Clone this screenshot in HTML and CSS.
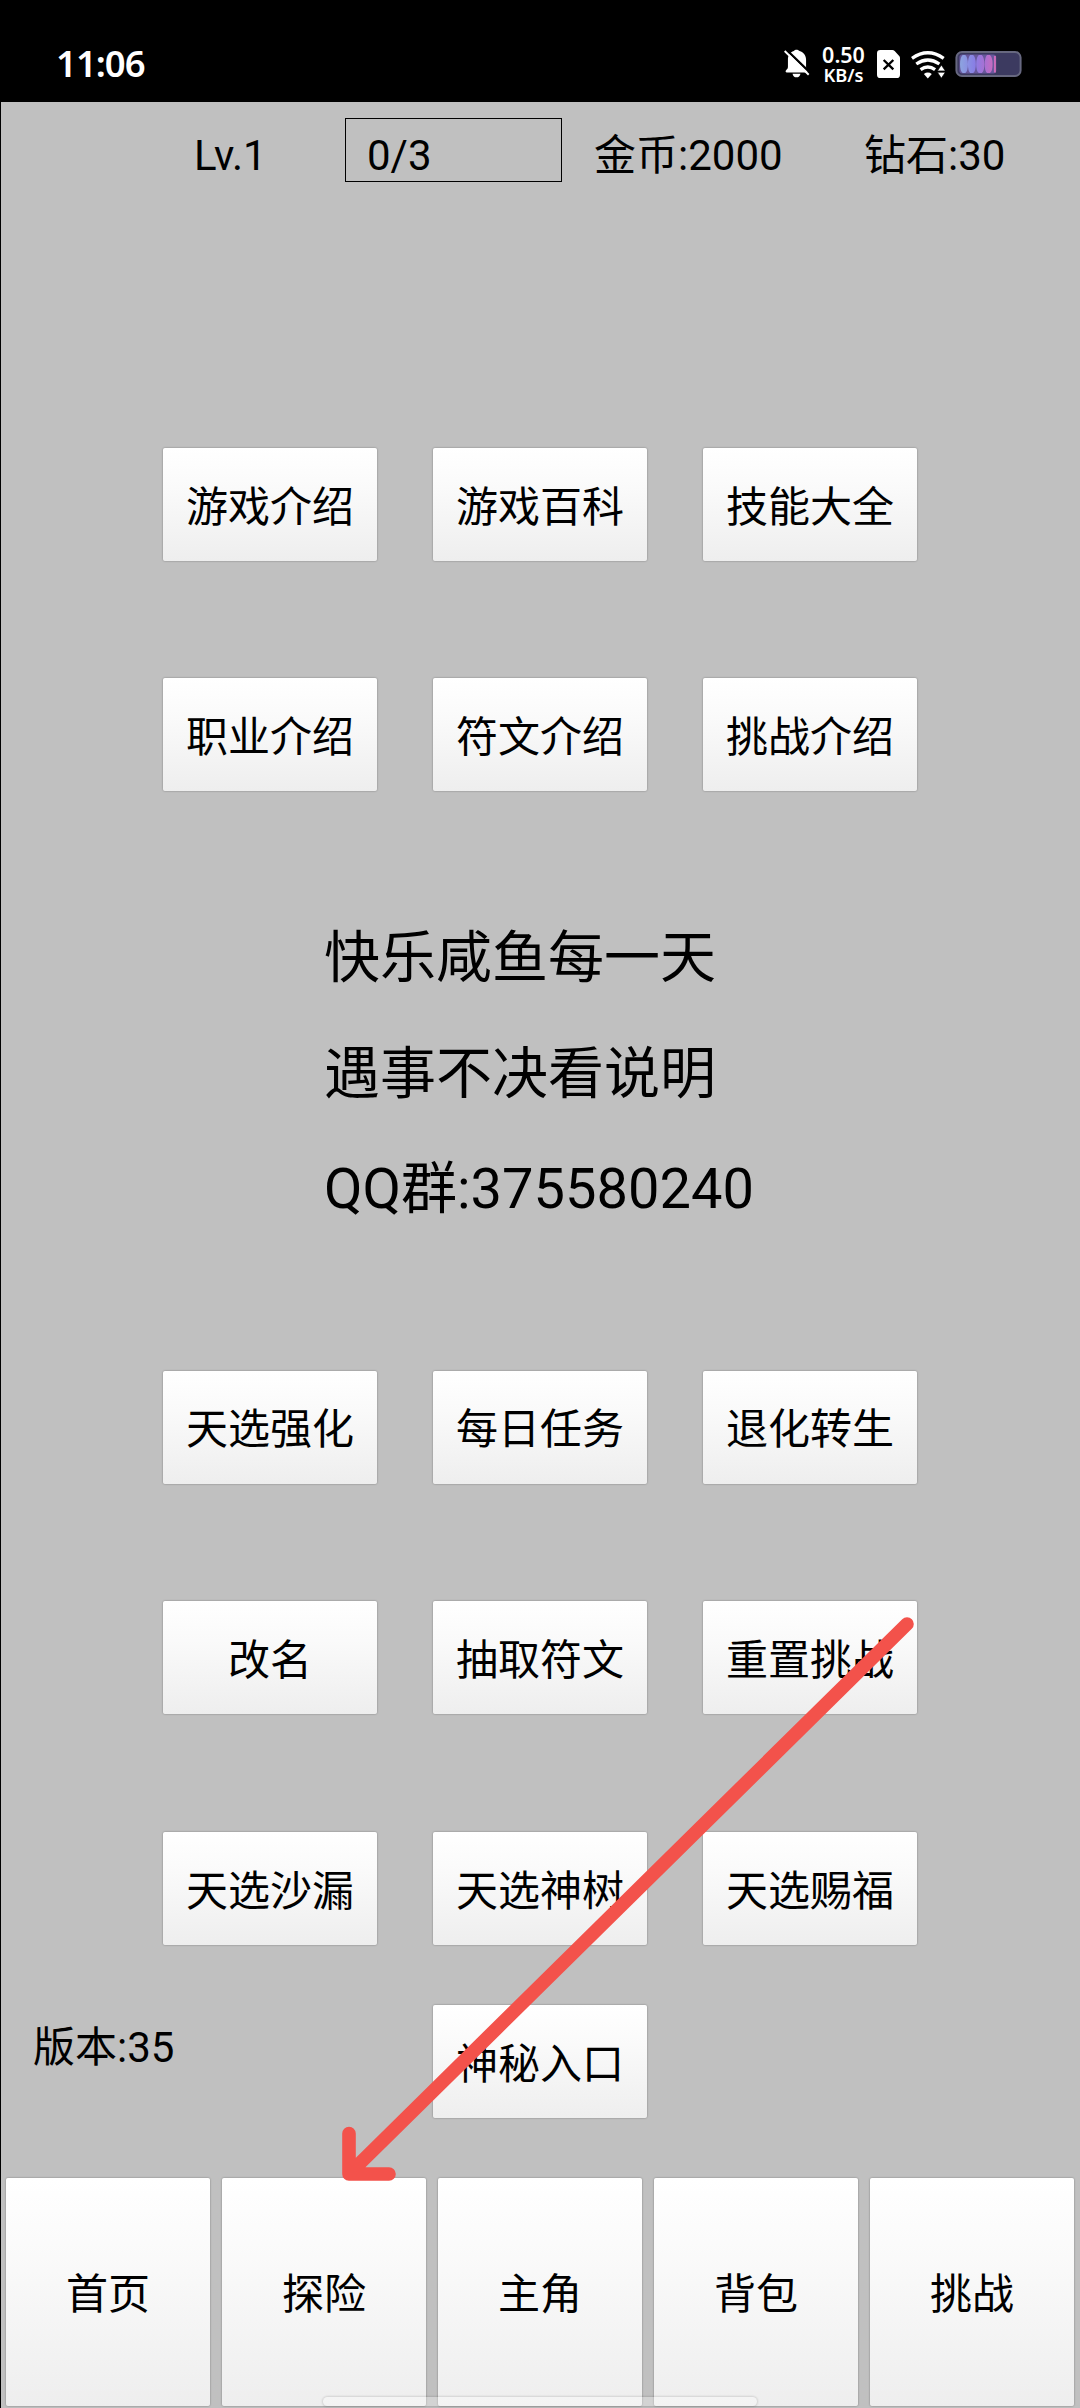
FILE: index.html
```html
<!DOCTYPE html>
<html lang="zh-CN">
<head>
<meta charset="utf-8">
<title>首页</title>
<link rel="stylesheet" href="styles.css">
</head>
<body>
<div class="screen">
  <header class="status">
    <span class="clock">11:06</span>
    <div class="status-icons">
      <svg class="icon-bell" viewBox="78 58 77 88">
        <path d="M115 60c-4 0-7 2-8 4-12 4-18 14-18 26v22c0 5-2 7-5 10-3 3-3 7 1 7h61c4 0 3-4 1-7-2-3-3-5-3-10V90c0-12-7-22-20-26-2-2-5-4-9-4zM103 133c1 7 6 11 12 11s11-4 12-11z" fill="#fff"/>
        <path d="M84 60l72 70" stroke="#000" stroke-width="7"/>
        <path d="M79 64l73 72" stroke="#fff" stroke-width="6"/>
      </svg>
      <div class="speed"><span class="speed-value">0.50</span><span class="speed-unit">KB/s</span></div>
      <svg class="icon-sim" viewBox="354 60 69 84">
        <path d="M364 60h36q4 0 7 3l13 14q3 3 3 7v50q0 10-10 10h-49q-10 0-10-10V70q0-10 10-10z" fill="#fff"/>
        <path d="M374 90l29 28M403 90l-29 28" stroke="#000" stroke-width="7"/>
      </svg>
      <svg class="icon-wifi" viewBox="455 62 103 84">
        <g fill="none" stroke="#fff" stroke-width="10">
          <path d="M458 84Q506 50 554 84"/>
          <path d="M471 101Q506 77 541 101"/>
          <path d="M484 118Q506 102 528 118"/>
        </g>
        <path d="M494 131q12-8 24 0l-12 14z" fill="#fff"/>
        <path d="M547 104l12 18h-24zM547 144l12-18h-24z" fill="#fff" stroke="#000" stroke-width="2"/>
      </svg>
      <svg class="icon-battery" viewBox="588 62 201 79">
        <defs><linearGradient id="charge" x1="0" x2="1"><stop offset="0" stop-color="#8da4df"/><stop offset=".4" stop-color="#887fe5"/><stop offset=".7" stop-color="#aa70d2"/><stop offset="1" stop-color="#d26bb8"/></linearGradient></defs>
        <rect x="591" y="65" width="195" height="73" rx="17" fill="#3c3a60" stroke="#676880" stroke-width="6"/>
        <rect x="600" y="73" width="112" height="57" rx="9" fill="#67579b"/>
        <path d="M610 74h8q8 7 8 28t-8 27h-8q-8-6-8-27t8-28zM633 74h9q8 7 8 28t-8 27h-9q-7-6-7-27t7-28zM659 74h9q8 7 8 28t-8 27h-9q-8-6-8-27t8-28zM684 74h9q8 7 8 28t-8 27h-9q-7-6-7-27t7-28zM705 77h6v50h-6z" fill="url(#charge)"/>
      </svg>
    </div>
  </header>

  <main class="content">
    <div class="stats">
      <span class="level">Lv.1</span>
      <div class="progress">0/3</div>
      <span class="coins">金币:2000</span>
      <span class="gems">钻石:30</span>
    </div>

    <div class="grid guides">
      <button class="btn">游戏介绍</button><button class="btn">游戏百科</button><button class="btn">技能大全</button>
      <button class="btn">职业介绍</button><button class="btn">符文介绍</button><button class="btn">挑战介绍</button>
    </div>

    <div class="notice">
      <p>快乐咸鱼每一天</p>
      <p>遇事不决看说明</p>
      <p>QQ群:375580240</p>
    </div>

    <div class="grid actions">
      <button class="btn">天选强化</button><button class="btn">每日任务</button><button class="btn">退化转生</button>
      <button class="btn">改名</button><button class="btn">抽取符文</button><button class="btn">重置挑战</button>
      <button class="btn">天选沙漏</button><button class="btn">天选神树</button><button class="btn">天选赐福</button>
    </div>

    <div class="footer-row">
      <span class="version">版本:35</span>
      <button class="btn">神秘入口</button>
    </div>

    <nav class="tabs">
      <button class="btn">首页</button>
      <button class="btn">探险</button>
      <button class="btn">主角</button>
      <button class="btn">背包</button>
      <button class="btn">挑战</button>
    </nav>
  </main>

  <svg class="arrow" viewBox="0 0 580 570">
    <path d="M572 14L14 564M14 523.5V564H54" fill="none" stroke="#f3524b" stroke-width="13.6" stroke-linecap="round" stroke-linejoin="round"/>
  </svg>
  <div class="gesture-bar"></div>
</div>
</body>
</html>
```

FILE: styles.css
```css
* { box-sizing: border-box; }

body {
  margin: 0;
  background: #000;
  color: #000;
  font-family: Roboto, "Noto Sans CJK SC", sans-serif;
  font-size: 42px;
  line-height: 50px;
}

.screen {
  position: relative;
  width: 1080px;
  height: 2408px;
  overflow: hidden;
  display: flex;
  flex-direction: column;
}

.status {
  height: 102px;
  flex: none;
  padding: 26px 58px 0 56px;
  display: flex;
  justify-content: space-between;
  background: #000;
  color: #fff;
  font-family: "Noto Sans", sans-serif;
}

.clock {
  padding-top: 12px;
  font-size: 36.5px;
  font-weight: 600;
  line-height: 50px;
  letter-spacing: -1px;
}

.status-icons { display: flex; align-items: flex-start; }
.status-icons svg { flex: none; display: block; }
.icon-bell { width: 26px; height: 29px; margin-top: 23px; }
.speed {
  width: 45px;
  margin: 19px 11px 0 11px;
  display: flex;
  flex-direction: column;
  align-items: center;
  font-weight: 600;
}
.speed-value { font-size: 21.5px; line-height: 20px; }
.speed-unit { font-size: 18.3px; line-height: 20px; }
.icon-sim { width: 23px; height: 28px; margin-top: 24px; }
.icon-wifi { width: 34px; height: 28px; margin: 25px 10px 0 11px; }
.icon-battery { width: 67px; height: 26px; margin-top: 25px; }

.content {
  flex: 1;
  border-left: 1px solid #000;
  background: #c0c0c0;
}

.stats {
  height: 80px;
  padding: 16px 0 0 193px;
  display: flex;
}
.stats span { padding-top: 13px; white-space: nowrap; }
.level { width: 151px; }
.progress {
  width: 217px;
  height: 64px;
  padding: 12px 0 0 21px;
  border: 1px solid #000;
}
.coins { width: 269px; padding-left: 32px; }
.gems { padding-left: 33px; }

.btn {
  padding: 6px 0 0;
  border: 0;
  border-radius: 2px;
  background: linear-gradient(#fff, #fafafa 35%, #eee);
  box-shadow: 0 0 2px rgba(0, 0, 0, .4);
  color: #000;
  font: inherit;
}

.grid {
  display: grid;
  grid-template-columns: repeat(3, 214px);
  grid-auto-rows: 113px;
  column-gap: 56px;
  padding-left: 162px;
}
.guides { margin-top: 266px; row-gap: 117px; }
.actions { margin-top: 123px; row-gap: 117.75px; }

.notice {
  margin-top: 110px;
  padding-left: 323px;
  font-size: 56px;
}
.notice p { margin: 0; height: 115.5px; line-height: 115.5px; }

.footer-row {
  margin-top: 60px;
  height: 113px;
  display: flex;
}
.version { width: 432px; padding: 18px 0 0 32px; }
.footer-row .btn { width: 214px; }

.tabs {
  margin-top: 60px;
  padding-left: 5px;
  height: 228px;
  display: grid;
  grid-template-columns: repeat(5, 204px);
  column-gap: 12px;
}

.arrow {
  position: absolute;
  left: 335px;
  top: 1610px;
  width: 580px;
  height: 570px;
  overflow: visible;
}

.gesture-bar {
  position: absolute;
  left: 323px;
  top: 2397px;
  width: 434px;
  height: 9px;
  border-radius: 5px;
  background: rgba(255, 255, 255, .3);
  box-shadow: 0 0 2px 1px rgba(0, 0, 0, .12);
}
```
